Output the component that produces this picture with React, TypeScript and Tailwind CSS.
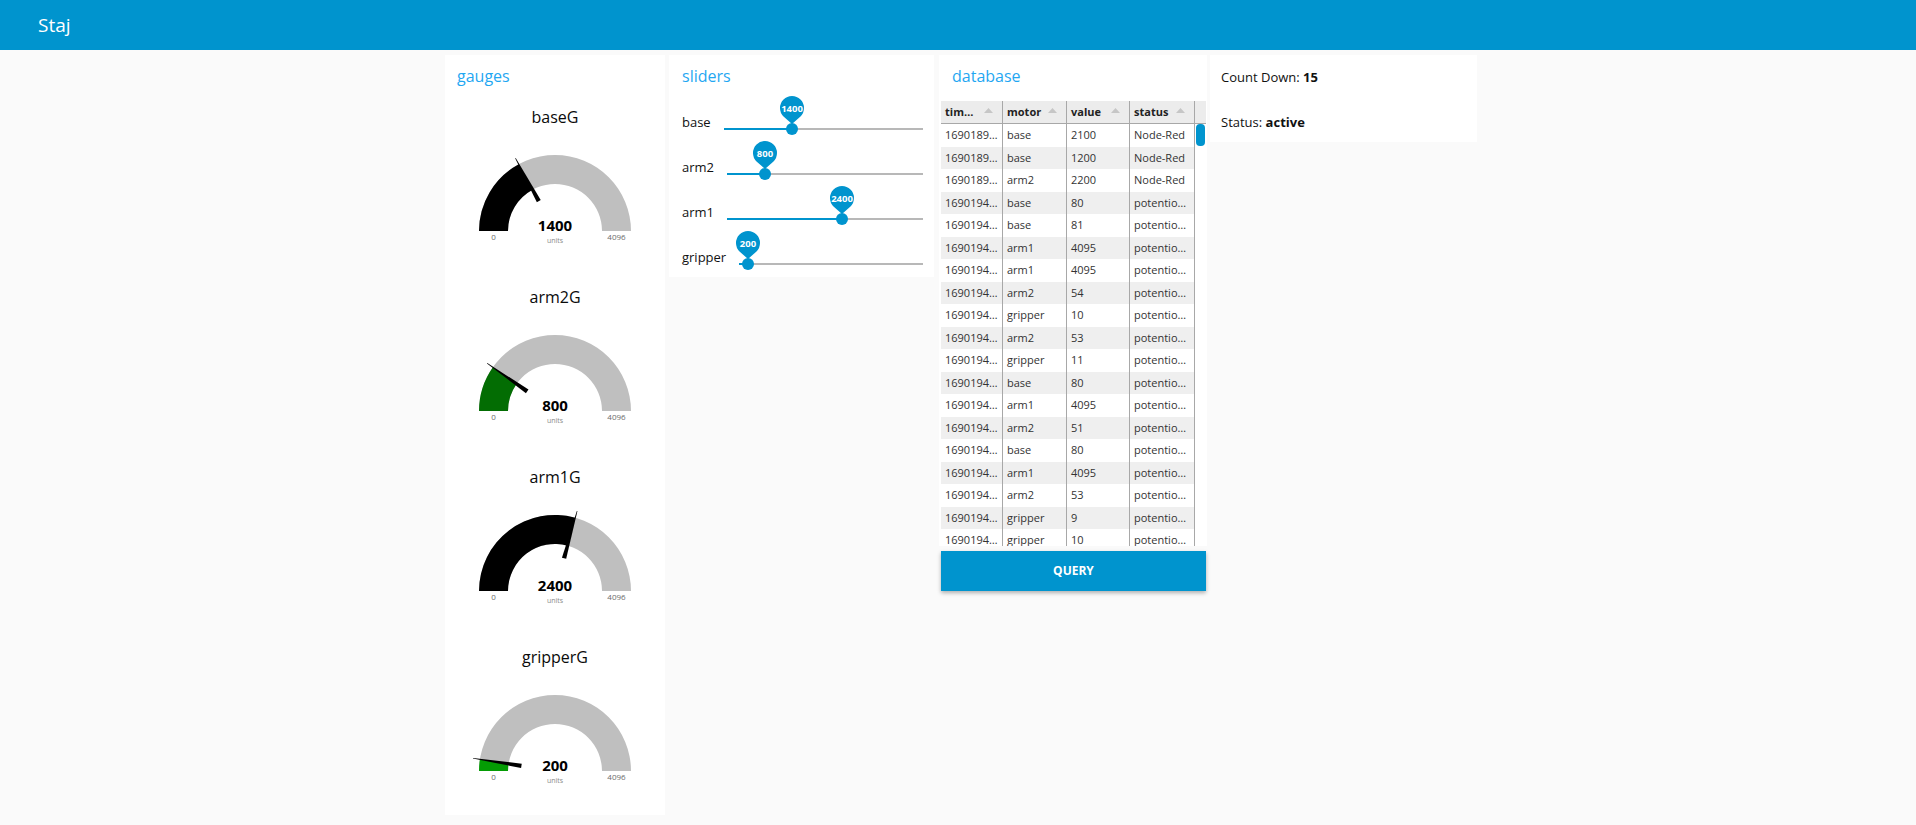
import React from "react";

const MAX = 4096;

function Gauge({ title, value, color }: { title: string; value: number; color: string }) {
  const cx = 110, cy = 136, R = 76, r = 47;
  const f = value / MAX;
  const a = Math.PI * (1 - f);
  const c = Math.cos(a), s = Math.sin(a);
  const bg = `M ${cx - R} ${cy} A ${R} ${R} 0 0 1 ${cx + R} ${cy} L ${cx + r} ${cy} A ${r} ${r} 0 0 0 ${cx - r} ${cy} Z`;
  const fill = `M ${cx - R} ${cy} A ${R} ${R} 0 0 1 ${cx + R * c} ${cy - R * s} L ${cx + r * c} ${cy - r * s} A ${r} ${r} 0 0 0 ${cx - r} ${cy} Z`;
  const px = s, py = c;
  const tipR = 83, baseR = 34;
  const tx = cx + tipR * c, ty = cy - tipR * s;
  const bx = cx + baseR * c, by = cy - baseR * s;
  const needle = `M ${bx + 2.2 * px} ${by + 2.2 * py} L ${tx + 0.3 * px} ${ty + 0.3 * py} L ${tx - 0.3 * px} ${ty - 0.3 * py} L ${bx - 2.2 * px} ${by - 2.2 * py} Z`;
  return (
    <svg width={219} height={180} className="block" fontFamily="'Open Sans', sans-serif">
      <text x={110} y={28} textAnchor="middle" fontSize={16} fill="#0a0a0a">{title}</text>
      <path d={bg} fill="#bfbfbf" />
      <path d={fill} fill={color} />
      <path d={needle} fill="#000" />
      <text x={110} y={135.5} textAnchor="middle" fontSize={15} fontWeight={700} fill="#000">{value}</text>
      <text x={110} y={148} textAnchor="middle" fontSize={7} fill="#8a8a8a">units</text>
      <text x={48.5} y={145} textAnchor="middle" fontSize={8} fill="#6b6b6b">0</text>
      <text x={171.5} y={145} textAnchor="middle" fontSize={8} fill="#6b6b6b">4096</text>
    </svg>
  );
}

function Slider({ label, value }: { label: string; value: number }) {
  const pct = (value / MAX) * 100;
  return (
    <div className="flex h-[45px] items-start">
      <div className="mt-[17px] text-[13px] leading-[20px] text-[#111]">{label}</div>
      <div className="relative ml-[13px] mt-[33px] h-[2px] flex-1 bg-[#b8b8b8]">
        <div className="absolute left-0 top-0 h-[2px] bg-[#0094ce]" style={{ width: `${pct}%` }} />
        <div
          className="absolute top-[-5px] h-[12px] w-[12px] rounded-full bg-[#0094ce]"
          style={{ left: `calc(${pct}% - 6px)` }}
        />
        <svg
          width={26}
          height={30}
          className="absolute top-[-33px]"
          style={{ left: `calc(${pct}% - 13px)` }}
        >
          <path d="M13 29 L4.51 21.49 A12 12 0 1 1 21.49 21.49 Z" fill="#0094ce" />
          <text
            x={13}
            y={16.5}
            textAnchor="middle"
            fontSize={9.5}
            fontWeight={700}
            fill="#fff"
            fontFamily="'Open Sans', sans-serif"
          >
            {value}
          </text>
        </svg>
      </div>
    </div>
  );
}

const rows: [string, string, string, string][] = [
  ["1690189…", "base", "2100", "Node-Red"],
  ["1690189…", "base", "1200", "Node-Red"],
  ["1690189…", "arm2", "2200", "Node-Red"],
  ["1690194…", "base", "80", "potentio…"],
  ["1690194…", "base", "81", "potentio…"],
  ["1690194…", "arm1", "4095", "potentio…"],
  ["1690194…", "arm1", "4095", "potentio…"],
  ["1690194…", "arm2", "54", "potentio…"],
  ["1690194…", "gripper", "10", "potentio…"],
  ["1690194…", "arm2", "53", "potentio…"],
  ["1690194…", "gripper", "11", "potentio…"],
  ["1690194…", "base", "80", "potentio…"],
  ["1690194…", "arm1", "4095", "potentio…"],
  ["1690194…", "arm2", "51", "potentio…"],
  ["1690194…", "base", "80", "potentio…"],
  ["1690194…", "arm1", "4095", "potentio…"],
  ["1690194…", "arm2", "53", "potentio…"],
  ["1690194…", "gripper", "9", "potentio…"],
  ["1690194…", "gripper", "10", "potentio…"],
];

const colW = ["w-[62px]", "w-[64px]", "w-[63px]", "w-[65px]"];

function HeaderCell({ text, w }: { text: string; w: string }) {
  return (
    <div className={`${w} relative flex h-full items-center border-r border-[#a8a8a8] pl-[4px] font-bold`}>
      <span>{text}</span>
      <svg width={9} height={5} className="absolute right-[9px] top-[7px]">
        <path d="M0 5 L4.5 0 L9 5 Z" fill="#c6c6c6" />
      </svg>
    </div>
  );
}

export default function App() {
  return (
    <div className="min-h-screen bg-[#fafafa] font-['Open_Sans','Liberation_Sans',sans-serif]">
      <header className="flex h-[50px] items-center bg-[#0094ce] pl-[38px] text-[19px] text-white">
        Staj
      </header>
      <div className="flex items-start pt-[5px]">
        {/* gauges */}
        <div className="ml-[445px] h-[760px] w-[220px] bg-white">
          <div className="h-[40px] pl-[12px] pt-[9px] text-[16px] leading-[24px] text-[#1fa7f2]">gauges</div>
          <Gauge title="baseG" value={1400} color="#000000" />
          <Gauge title="arm2G" value={800} color="#036d03" />
          <Gauge title="arm1G" value={2400} color="#000000" />
          <Gauge title="gripperG" value={200} color="#049c04" />
        </div>

        {/* sliders */}
        <div className="ml-[4px] h-[222px] w-[265px] bg-white pl-[13px] pr-[11px]">
          <div className="h-[40px] pt-[9px] text-[16px] leading-[24px] text-[#1fa7f2]">sliders</div>
          <Slider label="base" value={1400} />
          <Slider label="arm2" value={800} />
          <Slider label="arm1" value={2400} />
          <Slider label="gripper" value={200} />
        </div>

        {/* database */}
        <div className="ml-[5px] w-[268px]">
          <div className="h-[491px] bg-white">
            <div className="h-[46px] pl-[13px] pt-[9px] text-[16px] leading-[24px] text-[#1fa7f2]">database</div>
            <div className="ml-[2px] w-[265px] text-[11px] text-[#333]">
              <div className="flex h-[23px] border-b border-[#a8a8a8] bg-[#ececec] text-[#222]">
                <HeaderCell text="tim…" w={colW[0]} />
                <HeaderCell text="motor" w={colW[1]} />
                <HeaderCell text="value" w={colW[2]} />
                <HeaderCell text="status" w={colW[3]} />
                <div className="flex-1" />
              </div>
              <div className="relative h-[422px] overflow-hidden">
                {rows.map((r, i) => (
                  <div key={i} className={`flex h-[22.5px] ${i % 2 === 1 ? "bg-[#efefef]" : "bg-white"}`}>
                    {r.map((c, j) => (
                      <div
                        key={j}
                        className={`${colW[j]} flex items-center overflow-hidden whitespace-nowrap border-r border-[#a8a8a8] pl-[4px]`}
                      >
                        {c}
                      </div>
                    ))}
                    <div className="flex-1 bg-white" />
                  </div>
                ))}
                <div className="absolute right-[1px] top-[0px] h-[22px] w-[9px] rounded-[4px] bg-[#0094ce]" />
              </div>
            </div>
          </div>
          <button className="ml-[2px] mt-[5px] flex h-[40px] w-[265px] items-center justify-center bg-[#0094ce] text-[12px] font-bold text-white shadow-[0_2px_4px_rgba(0,0,0,0.3)]">
            QUERY
          </button>
        </div>

        {/* status */}
        <div className="ml-[3px] h-[87px] w-[267px] bg-white pl-[11px] pt-[12px] text-[13px] leading-[20px] text-[#111]">
          <div className="h-[45px]">
            Count Down: <span className="font-bold">15</span>
          </div>
          <div>
            Status: <span className="font-bold">active</span>
          </div>
        </div>
      </div>
    </div>
  );
}
